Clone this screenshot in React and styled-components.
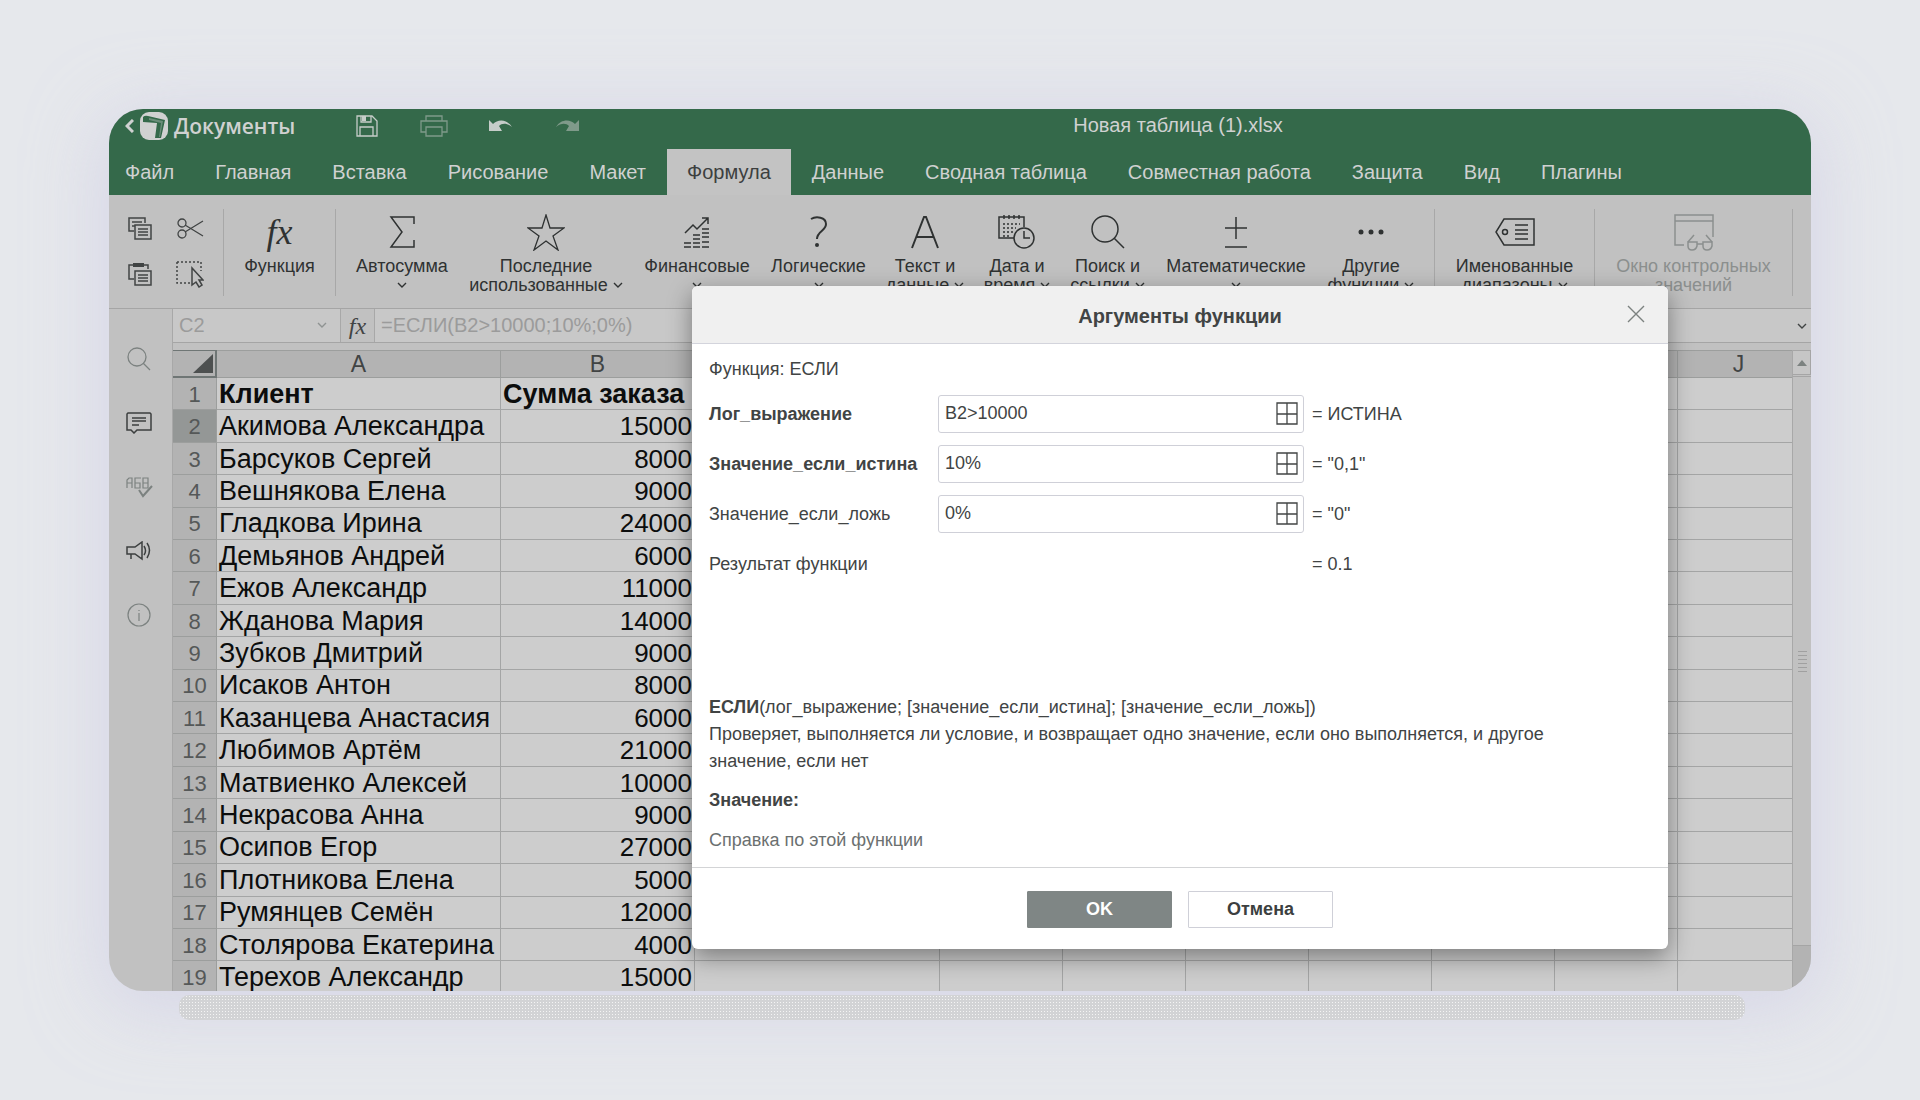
import React from "react";
import styled, { createGlobalStyle } from "styled-components";

const GlobalStyle = createGlobalStyle`
  * {
    box-sizing: border-box;
  }
  body {
    margin: 0;
    background: #e6e8ec;
    font-family: "Liberation Sans", Arial, sans-serif;
    color: #414444;
  }
  button, input {
    font-family: inherit;
    color: inherit;
  }
`;

const tabs = [
  "Файл",
  "Главная",
  "Вставка",
  "Рисование",
  "Макет",
  "Формула",
  "Данные",
  "Сводная таблица",
  "Совместная работа",
  "Защита",
  "Вид",
  "Плагины",
];

const orders = [
  ["Акимова Александра", 15000],
  ["Барсуков Сергей", 8000],
  ["Вешнякова Елена", 9000],
  ["Гладкова Ирина", 24000],
  ["Демьянов Андрей", 6000],
  ["Ежов Александр", 11000],
  ["Жданова Мария", 14000],
  ["Зубков Дмитрий", 9000],
  ["Исаков Антон", 8000],
  ["Казанцева Анастасия", 6000],
  ["Любимов Артём", 21000],
  ["Матвиенко Алексей", 10000],
  ["Некрасова Анна", 9000],
  ["Осипов Егор", 27000],
  ["Плотникова Елена", 5000],
  ["Румянцев Семён", 12000],
  ["Столярова Екатерина", 4000],
  ["Терехов Александр", 15000],
];

const restColumns = ["C", "D", "E", "F", "G", "H", "I", "J"];

const args = [
  { id: "test", label: "Лог_выражение", value: "B2>10000", result: "= ИСТИНА", required: true },
  { id: "yes", label: "Значение_если_истина", value: "10%", result: '= "0,1"', required: true },
  { id: "no", label: "Значение_если_ложь", value: "0%", result: '= "0"', required: false },
];

function Icon({ w, h, children, width = 1.5 }) {
  return (
    <svg
      width={w}
      height={h}
      viewBox={`0 0 ${w} ${h}`}
      fill="none"
      stroke="currentColor"
      strokeWidth={width}
      aria-hidden="true"
    >
      {children}
    </svg>
  );
}

const Chevron = () => (
  <Icon w={10} h={7} width={1.4}>
    <path d="M1 1l4 4 4-4" />
  </Icon>
);

const BackIcon = () => (
  <Icon w={9} h={14} width={3}>
    <path d="M8 1L2 7l6 6" />
  </Icon>
);

const LogoIcon = () => (
  <svg width="28" height="28" viewBox="0 0 28 28" aria-hidden="true">
    <rect width="28" height="28" rx="9" fill="#d0d1d1" />
    <path d="M3 5q2-2 5-1l17 4-4 18h-6l2-15-14-1z" fill="#34694a" />
    <path d="M9 6l14 3-3 16h-1l2-14-12-3z" fill="#d0d1d1" opacity="0.35" />
  </svg>
);

const SaveIcon = () => (
  <Icon w={22} h={22} width={1.3}>
    <path d="M1 1h15l5 5v15H1zM4 21V12h13v9M5 1v6h10V1" />
    <path d="M6 1h4v5H6z" fill="currentColor" stroke="none" />
  </Icon>
);

const PrintIcon = () => (
  <Icon w={28} h={22} width={1.3}>
    <path d="M6 6V1h16v5M6 17H1V6h26v11h-5M6 12h16v9H6z" />
  </Icon>
);

const UndoIcon = () => (
  <svg width="23" height="13" viewBox="0 0 23 13" aria-hidden="true">
    <path d="M0 1l4 4C9 0 18 0 23 8c-5-4-10-4-13-1l3 5H0z" fill="currentColor" />
  </svg>
);

const RedoIcon = () => (
  <svg width="23" height="13" viewBox="0 0 23 13" aria-hidden="true">
    <path d="M23 1l-4 4C14 0 5 0 0 8c5-4 10-4 13-1l-3 5h13z" fill="currentColor" />
  </svg>
);

const CopyIcon = () => (
  <Icon w={24} h={23}>
    <path d="M6 14H1V1h16v5M4 5h10M4 9h3M7 8h16v14H7zM10 12h10M10 15h10M10 18h10" />
  </Icon>
);

const PasteIcon = () => (
  <Icon w={24} h={24}>
    <path d="M6 17H1V3h19v4M7 9h16v14H7zM10 13h10M10 16h10M10 19h10" />
    <path d="M5 1h11v4H5z" fill="currentColor" stroke="none" />
  </Icon>
);

const CutIcon = () => (
  <Icon w={27} h={21} width={1.3}>
    <circle cx="5" cy="5" r="4" />
    <circle cx="5" cy="16" r="4" />
    <path d="M8 7l18 11M8 14L26 3" />
  </Icon>
);

const SelectIcon = () => (
  <Icon w={28} h={27}>
    <path d="M1 1h24v9M1 1v21h14" strokeDasharray="2 2" />
    <path d="M16 7v17l4-3 3 5 3-2-3-5h4z" />
  </Icon>
);

const SumIcon = () => (
  <Icon w={26} h={32}>
    <path d="M25 8V1H2l11 15L2 31h23v-7" />
  </Icon>
);

const StarIcon = () => (
  <Icon w={38} h={37} width={1.3}>
    <path d="M19 1l4 13h14l-11 8 5 14-12-9-12 9 5-14L1 14h14z" />
  </Icon>
);

const FinanceIcon = () => (
  <Icon w={26} h={31}>
    <path d="M1 16l8-8 4 4L24 1M18 1h6v6" />
    <path d="M0 26h7M0 30h7M9 18h7M9 22h7M9 26h7M9 30h7M18 12h7M18 16h7M18 20h7M18 25h7M18 30h7" />
  </Icon>
);

const QuestionIcon = () => (
  <Icon w={18} h={32} width={2}>
    <path d="M1 3c5-3 15-2 15 5 0 7-9 7-9 15" />
    <circle cx="7" cy="29" r="2" fill="currentColor" stroke="none" />
  </Icon>
);

const LetterIcon = () => (
  <Icon w={28} h={33} width={2}>
    <path d="M1 32L13 1h2l12 31M6 21h16" />
  </Icon>
);

const DateIcon = () => (
  <Icon w={38} h={34}>
    <path d="M16 23H1V2h25v10M6 0v4M11 0v4M16 0v4M21 0v4" />
    <path d="M5 9h17M5 13h13M5 17h11M5 21h6" strokeDasharray="2 2" />
    <circle cx="26" cy="23" r="10" />
    <path d="M26 16v7h6" />
  </Icon>
);

const SearchIcon = () => (
  <Icon w={34} h={34}>
    <circle cx="14" cy="14" r="13" />
    <path d="M23 23l10 10" />
  </Icon>
);

const MathIcon = () => (
  <Icon w={22} h={31}>
    <path d="M11 0v22M0 11h22M0 30h22" />
  </Icon>
);

const MoreIcon = () => (
  <Icon w={26} h={6}>
    <g fill="currentColor" stroke="none">
      <circle cx="3" cy="3" r="2.5" />
      <circle cx="13" cy="3" r="2.5" />
      <circle cx="23" cy="3" r="2.5" />
    </g>
  </Icon>
);

const TagIcon = () => (
  <Icon w={40} h={28}>
    <path d="M9 1h30v26H9L1 14zM20 7h13M20 12h13M20 16h13M20 21h13" />
    <circle cx="10" cy="14" r="2.5" />
  </Icon>
);

const WatchIcon = () => (
  <Icon w={40} h={37}>
    <path d="M10 31H1V1h38v22M1 7h38" />
    <path d="M14 28l6-7M38 28l-6-7M23 30h6" />
    <path d="M14 28h9v4q-1 4-5 4t-4-4zM29 28h9v4q-1 4-5 4t-4-4z" />
  </Icon>
);

const FindIcon = () => (
  <Icon w={24} h={24} width={1.3}>
    <circle cx="10" cy="10" r="9" />
    <path d="M16 16l7 7" />
  </Icon>
);

const CommentIcon = () => (
  <Icon w={26} h={22}>
    <path d="M2 1h22l1 1v16H11l-3 3-3-3H1V2zM6 6h14M6 9h14M6 13h7" />
  </Icon>
);

const SpellIcon = () => (
  <Icon w={27} h={21} width={1.2}>
    <path d="M1 11V3l2-2h3v10M1 6h5M15 1H9v10h5V6H9M17 1h5v10h-5zM17 6h5" />
    <path d="M13 13l4 6L26 9" strokeWidth="2" />
  </Icon>
);

const HornIcon = () => (
  <Icon w={26} h={20}>
    <path d="M1 6h8l7-5v17l-7-5H1zM5 13v5M18 5q3 5 0 9M21 2q5 7 0 15" />
  </Icon>
);

const InfoIcon = () => (
  <Icon w={25} h={25} width={1.2}>
    <circle cx="12" cy="12" r="11" />
    <path d="M12 10v8M12 7v1" />
  </Icon>
);

const RangeIcon = () => (
  <Icon w={22} h={23} width={1.3}>
    <path d="M1 1h20v21H1zM11 1v21M1 12h20" />
  </Icon>
);

const CloseIcon = () => (
  <Icon w={18} h={18} width={1.4}>
    <path d="M1 1l16 16M17 1L1 17" />
  </Icon>
);

const tools = [
  { lines: ["Автосумма"], icon: <SumIcon />, width: 132 },
  { lines: ["Последние", "использованные"], icon: <StarIcon />, width: 156 },
  { lines: ["Финансовые"], icon: <FinanceIcon />, width: 146 },
  { lines: ["Логические"], icon: <QuestionIcon />, width: 97 },
  { lines: ["Текст и", "данные"], icon: <LetterIcon />, width: 116 },
  { lines: ["Дата и", "время"], icon: <DateIcon />, width: 68 },
  { lines: ["Поиск и", "ссылки"], icon: <SearchIcon />, width: 113 },
  { lines: ["Математические"], icon: <MathIcon />, width: 144 },
  { lines: ["Другие", "функции"], icon: <MoreIcon />, width: 126 },
];

function Tool({ lines, icon, width, plain, disabled }) {
  return (
    <ToolButton type="button" $width={width} disabled={disabled}>
      <ToolIcon>{icon}</ToolIcon>
      <ToolLabel>{lines[0]}</ToolLabel>
      <ToolLabel>
        {lines[1]}
        {!plain && <Chevron />}
      </ToolLabel>
    </ToolButton>
  );
}

function App() {
  return (
    <Page>
      <GlobalStyle />
      <Stage>
        <Window>
          <TitleBar>
            <Brand href="#">
              <BackIcon />
              <LogoIcon />
              Документы
            </Brand>
            <QuickBar>
              <QuickButton type="button" aria-label="Сохранить"><SaveIcon /></QuickButton>
              <QuickButton type="button" aria-label="Печать" $dim><PrintIcon /></QuickButton>
              <QuickButton type="button" aria-label="Отменить"><UndoIcon /></QuickButton>
              <QuickButton type="button" aria-label="Повторить" $dim><RedoIcon /></QuickButton>
            </QuickBar>
            <FileName>Новая таблица (1).xlsx</FileName>
          </TitleBar>
          <Tabs>
            {tabs.map((tab) => (
              <Tab key={tab} type="button" $active={tab === "Формула"}>
                {tab}
              </Tab>
            ))}
          </Tabs>
          <Toolbar>
            <ClipGrid>
              <IconButton type="button" aria-label="Копировать"><CopyIcon /></IconButton>
              <IconButton type="button" aria-label="Вырезать"><CutIcon /></IconButton>
              <IconButton type="button" aria-label="Вставить"><PasteIcon /></IconButton>
              <IconButton type="button" aria-label="Выделить"><SelectIcon /></IconButton>
            </ClipGrid>
            <Divider />
            <Tool lines={["Функция"]} icon={<FxMark $size={36}>fx</FxMark>} width={111} plain />
            <Divider />
            {tools.map((tool) => (
              <Tool key={tool.lines[0]} {...tool} />
            ))}
            <Divider />
            <Tool lines={["Именованные", "диапазоны"]} icon={<TagIcon />} width={159} />
            <Divider />
            <Tool lines={["Окно контрольных", "значений"]} icon={<WatchIcon />} width={197} plain disabled />
            <Divider />
          </Toolbar>
          <Workspace>
            <SideBar>
              <SideButton type="button" aria-label="Поиск" $dim><FindIcon /></SideButton>
              <SideButton type="button" aria-label="Комментарии"><CommentIcon /></SideButton>
              <SideButton type="button" aria-label="Проверка орфографии" $dim><SpellIcon /></SideButton>
              <SideButton type="button" aria-label="Обратная связь"><HornIcon /></SideButton>
              <SideButton type="button" aria-label="О программе" $dim><InfoIcon /></SideButton>
            </SideBar>
            <Editor>
              <FormulaBar>
                <NameBox>
                  <BarInput aria-label="Имя ячейки" defaultValue="C2" />
                  <Chevron />
                </NameBox>
                <FxCell><FxMark $size={24}>fx</FxMark></FxCell>
                <BarInput aria-label="Формула" defaultValue="=ЕСЛИ(B2>10000;10%;0%)" />
                <Expand type="button" aria-label="Развернуть"><Chevron /></Expand>
              </FormulaBar>
              <SheetArea>
                <SheetPane>
                  <Sheet>
                    <colgroup>
                      <Col $width={44} />
                      <Col $width={284} />
                      <Col $width={194} />
                      <Col $width={245} />
                      <Col $width={123} />
                      <Col $width={123} />
                      <Col $width={123} />
                      <Col $width={123} />
                      <Col $width={123} />
                      <Col $width={123} />
                      <Col />
                    </colgroup>
                    <thead>
                      <tr>
                        <Corner aria-label="Выделить всё"><Triangle /></Corner>
                        <ColumnHead>A</ColumnHead>
                        <ColumnHead>B</ColumnHead>
                        {restColumns.map((name) => (
                          <ColumnHead key={name}>{name}</ColumnHead>
                        ))}
                      </tr>
                    </thead>
                    <tbody>
                      <tr>
                        <RowHead>1</RowHead>
                        <Cell $bold>Клиент</Cell>
                        <Cell $bold>Сумма заказа</Cell>
                        {restColumns.map((name) => <Cell key={name} />)}
                      </tr>
                      {orders.map(([client, sum], i) => (
                        <tr key={client}>
                          <RowHead $active={i === 0}>{i + 2}</RowHead>
                          <Cell>{client}</Cell>
                          <NumberCell>{sum}</NumberCell>
                          {restColumns.map((name) => <Cell key={name} />)}
                        </tr>
                      ))}
                    </tbody>
                  </Sheet>
                </SheetPane>
                <ScrollBar>
                  <ScrollUp type="button" aria-label="Вверх"><UpArrow /></ScrollUp>
                  <Thumb><Grip /></Thumb>
                  <Track />
                </ScrollBar>
              </SheetArea>
            </Editor>
          </Workspace>
          <Dialog role="dialog" aria-labelledby="dialog-title">
            <DialogHead>
              <DialogTitle id="dialog-title">Аргументы функции</DialogTitle>
              <CloseButton type="button" aria-label="Закрыть"><CloseIcon /></CloseButton>
            </DialogHead>
            <DialogBody>
              <Text>Функция: ЕСЛИ</Text>
              <ArgGrid>
                {args.map((arg) => (
                  <React.Fragment key={arg.id}>
                    <ArgLabel htmlFor={arg.id} $bold={arg.required}>{arg.label}</ArgLabel>
                    <Field>
                      <FieldInput id={arg.id} defaultValue={arg.value} />
                      <RangeButton type="button" aria-label="Выбор данных"><RangeIcon /></RangeButton>
                    </Field>
                    <Text>{arg.result}</Text>
                  </React.Fragment>
                ))}
                <ResultLabel>Результат функции</ResultLabel>
                <Text>= 0.1</Text>
              </ArgGrid>
              <Help>
                <Text>
                  <b>ЕСЛИ</b>(лог_выражение; [значение_если_истина]; [значение_если_ложь])
                </Text>
                <Text>
                  Проверяет, выполняется ли условие, и возвращает одно значение, если оно выполняется, и другое
                  значение, если нет
                </Text>
                <ValueLine><b>Значение:</b></ValueLine>
                <HelpLink href="#">Справка по этой функции</HelpLink>
              </Help>
            </DialogBody>
            <DialogFoot>
              <DialogButton type="button" $primary>OK</DialogButton>
              <DialogButton type="button">Отмена</DialogButton>
            </DialogFoot>
          </Dialog>
        </Window>
        <Strip />
      </Stage>
    </Page>
  );
}

const Page = styled.main`
  display: flex;
  min-height: 100vh;
  padding: 109px;
  overflow: hidden;
`;
const Stage = styled.div`
  position: relative;
  display: flex;
  flex: 1;
  min-width: 0;
`;
const Strip = styled.div`
  position: absolute;
  left: 70px;
  right: 66px;
  bottom: -29px;
  height: 25px;
  border-radius: 10px;
  background: radial-gradient(#f4f4f4 0 1px, #d2d3d5 1px) 0 0 / 3px 3px;
`;
const Window = styled.div`
  position: relative;
  display: flex;
  flex-direction: column;
  flex: 1;
  min-width: 0;
  height: calc(100vh - 218px);
  border-radius: 34px;
  overflow: hidden;
  background: #c1c1c1;
  box-shadow: 0 12px 70px 8px rgba(205, 203, 228, 0.6);
`;
const TitleBar = styled.header`
  display: flex;
  align-items: center;
  height: 40px;
  padding: 0 16px 7px;
  background: #34694a;
  color: #d0d1d1;
`;
const Brand = styled.a`
  display: flex;
  align-items: center;
  gap: 6px;
  width: 208px;
  font-family: "Open Sans", "Noto Sans", sans-serif;
  font-size: 21px;
  font-weight: 600;
  line-height: 28px;
  color: inherit;
  text-decoration: none;
`;
const QuickBar = styled.div`
  display: flex;
`;
const QuickButton = styled.button`
  display: flex;
  align-items: center;
  justify-content: center;
  width: 67px;
  height: 28px;
  padding: 0;
  border: none;
  background: none;
  color: ${(props) => (props.$dim ? "#7f9a8a" : "#c6cdc9")};
`;
const FileName = styled.div`
  flex: 1;
  padding-right: 40px;
  font-size: 20px;
  text-align: center;
`;
const Tabs = styled.nav`
  display: flex;
  gap: 1px;
  height: 46px;
  background: #34694a;
`;
const Tab = styled.button`
  height: 46px;
  padding: 0 20px;
  border: none;
  font-size: 20px;
  white-space: nowrap;
  background: ${(props) => (props.$active ? "#c3c3c3" : "none")};
  color: ${(props) => (props.$active ? "#3c3f3f" : "#d0d1d1")};
  &:first-child {
    padding-left: 16px;
  }
`;
const Toolbar = styled.div`
  display: flex;
  height: 114px;
  padding: 14px 0 6px;
  border-bottom: 1px solid #a5a5a5;
  background: #c1c1c1;
  overflow: hidden;
`;
const ClipGrid = styled.div`
  display: grid;
  grid-template-columns: 50px 50px;
  grid-template-rows: 38px 54px;
  width: 114px;
  padding-left: 6px;
`;
const IconButton = styled.button`
  display: flex;
  align-items: center;
  justify-content: center;
  padding: 0;
  border: none;
  background: none;
`;
const Divider = styled.div`
  flex: none;
  width: 1px;
  height: 87px;
  background: #a8a8a8;
`;
const ToolButton = styled.button`
  display: flex;
  flex-direction: column;
  align-items: center;
  flex: none;
  width: ${(props) => props.$width}px;
  padding: 0;
  border: none;
  background: none;
  font-size: 18px;
  line-height: 19px;
  white-space: nowrap;
  color: ${(props) => (props.disabled ? "#8b8f8e" : "#2f3232")};
`;
const ToolIcon = styled.span`
  display: flex;
  align-items: center;
  justify-content: center;
  height: 46px;
  margin-bottom: 2px;
`;
const ToolLabel = styled.span`
  display: flex;
  align-items: center;
  justify-content: center;
  gap: 5px;
  height: 19px;
`;
const FxMark = styled.i`
  font-family: "Liberation Serif", serif;
  font-size: ${(props) => props.$size}px;
  line-height: 1;
`;
const Workspace = styled.div`
  display: flex;
  flex: 1;
  min-height: 0;
`;
const SideBar = styled.aside`
  display: flex;
  flex-direction: column;
  width: 63px;
  padding: 18px 3px 0 0;
`;
const SideButton = styled.button`
  display: flex;
  align-items: center;
  justify-content: center;
  height: 64px;
  padding: 0;
  border: none;
  background: none;
  color: ${(props) => (props.$dim ? "#7c8280" : "#3c3f3f")};
`;
const Editor = styled.div`
  display: flex;
  flex-direction: column;
  flex: 1;
  min-width: 0;
  border-left: 1px solid #a8a8a8;
`;
const FormulaBar = styled.div`
  display: flex;
  flex: none;
  height: 34px;
  border-bottom: 1px solid #a5a5a5;
  background: #c8c8c8;
`;
const NameBox = styled.div`
  display: flex;
  align-items: center;
  width: 167px;
  padding-right: 13px;
  color: #8f9392;
`;
const BarInput = styled.input`
  flex: 1;
  min-width: 0;
  padding: 0 6px;
  border: none;
  background: none;
  font-size: 20px;
  color: #9b9b9b;
`;
const FxCell = styled.div`
  display: flex;
  align-items: center;
  justify-content: center;
  width: 35px;
  border-left: 1px solid #a8a8a8;
  border-right: 1px solid #a8a8a8;
  background: #c1c1c1;
`;
const Expand = styled.button`
  width: 18px;
  padding: 0;
  border: none;
  background: #c8c8c8;
`;
const SheetArea = styled.div`
  display: flex;
  flex: 1;
  min-height: 0;
  margin-top: 7px;
`;
const SheetPane = styled.div`
  flex: 1;
  min-width: 0;
  overflow: hidden;
`;
// the last column runs on under the scroll bar
const Sheet = styled.table`
  width: calc(100% + 8px);
  height: 644px;
  border-collapse: separate;
  border-spacing: 0;
  table-layout: fixed;
`;
const Col = styled.col`
  width: ${(props) => (props.$width ? `${props.$width}px` : "auto")};
`;
const ColumnHead = styled.th`
  height: 28px;
  padding: 0;
  border: solid #9c9e9d;
  border-width: 1px 1px 1px 0;
  background: #b3b3b3;
  font-size: 23px;
  font-weight: 400;
  line-height: 24px;
`;
const Corner = styled(ColumnHead)`
  border-color: #6f7675;
  border-width: 1px 2px 2px 0;
`;
const Triangle = styled.div`
  width: 20px;
  height: 19px;
  margin-left: 20px;
  background: #4d5050;
  clip-path: polygon(100% 0, 100% 100%, 0 100%);
`;
const RowHead = styled.th`
  height: 32px;
  padding: 2px 0 0;
  border: solid #9c9e9d;
  border-width: 0 1px 1px 0;
  background: ${(props) => (props.$active ? "#949796" : "#b3b3b3")};
  font-size: 22px;
  font-weight: 400;
  line-height: 24px;
  color: #555858;
`;
const Cell = styled.td`
  height: 32px;
  padding: 0 2px;
  border: solid #a4a5a5;
  border-width: 0 1px 1px 0;
  background: #cdcdcd;
  font-size: 27px;
  font-weight: ${(props) => (props.$bold ? 700 : 400)};
  line-height: 28px;
  white-space: nowrap;
  color: #0c0d0d;
`;
const NumberCell = styled(Cell)`
  font-size: 26px;
  text-align: right;
`;
const ScrollBar = styled.div`
  display: flex;
  flex-direction: column;
  width: 19px;
  border-left: 1px solid #a8a8a8;
`;
const ScrollUp = styled.button`
  display: flex;
  align-items: center;
  justify-content: center;
  height: 25px;
  padding: 0;
  border: 1px solid #a5a5a5;
  border-left: none;
  background: #c6c6c6;
`;
const UpArrow = styled.span`
  border: 5px solid transparent;
  border-top: none;
  border-bottom: 6px solid #7c8280;
`;
const Thumb = styled.div`
  display: flex;
  align-items: center;
  justify-content: center;
  flex: 1;
  margin-top: 1px;
  border: solid #a5a5a5;
  border-width: 1px 0;
  background: #c1c1c1;
`;
const Grip = styled.div`
  width: 9px;
  height: 21px;
  background: repeating-linear-gradient(#a0a0a0 0 1px, transparent 1px 4px);
`;
const Track = styled.div`
  height: 45px;
  background: #b3b3b3;
`;
const Dialog = styled.section`
  position: absolute;
  top: 177px;
  left: 583px;
  right: 143px;
  display: flex;
  flex-direction: column;
  border-radius: 6px;
  overflow: hidden;
  background: #fff;
  box-shadow: 0 8px 24px rgba(0, 0, 0, 0.4);
`;
const DialogHead = styled.div`
  display: flex;
  align-items: center;
  justify-content: center;
  height: 58px;
  padding-top: 3px;
  border-bottom: 1px solid #d3d4dc;
  background: #f0f0f0;
`;
const DialogTitle = styled.h2`
  margin: 0;
  font-size: 20px;
  font-weight: 700;
`;
const CloseButton = styled.button`
  position: absolute;
  top: 19px;
  right: 23px;
  display: flex;
  padding: 0;
  border: none;
  background: none;
  color: #7c8280;
`;
const DialogBody = styled.div`
  height: 524px;
  padding: 12px 16px 0 17px;
  border-bottom: 1px solid #d3d4d6;
`;
const Text = styled.div`
  font-size: 18px;
  line-height: 27px;
`;
const ArgGrid = styled.div`
  display: grid;
  grid-template-columns: 221px 366px 1fr;
  grid-auto-rows: 38px;
  column-gap: 8px;
  row-gap: 12px;
  align-items: center;
  margin-top: 12px;
`;
const ArgLabel = styled.label`
  font-size: 18px;
  font-weight: ${(props) => (props.$bold ? 700 : 400)};
`;
const Field = styled.div`
  display: flex;
  align-items: center;
  height: 38px;
  padding-bottom: 2px;
  border: 1px solid #cfd0d8;
  border-radius: 3px;
`;
const FieldInput = styled.input`
  flex: 1;
  min-width: 0;
  padding: 0 6px;
  border: none;
  background: none;
  font-size: 18px;
`;
const RangeButton = styled.button`
  display: flex;
  padding: 0 5px;
  border: none;
  background: none;
`;
const ResultLabel = styled(Text)`
  grid-column: span 2;
`;
const Help = styled.div`
  margin-top: 111px;
  padding-right: 80px;
`;
const ValueLine = styled(Text)`
  margin-top: 12px;
`;
const HelpLink = styled.a`
  display: block;
  margin-top: 13px;
  font-size: 18px;
  line-height: 27px;
  color: #6b7070;
  text-decoration: none;
`;
const DialogFoot = styled.div`
  display: flex;
  justify-content: center;
  gap: 16px;
  padding: 23px 0 21px;
`;
const DialogButton = styled.button`
  width: 145px;
  height: 37px;
  border: 1px solid ${(props) => (props.$primary ? "#7f8685" : "#cfd0d8")};
  border-radius: 1px;
  background: ${(props) => (props.$primary ? "#7f8685" : "#fff")};
  font-size: 18px;
  font-weight: 700;
  color: ${(props) => (props.$primary ? "#fff" : "#3c3f3f")};
`;

export default App;
